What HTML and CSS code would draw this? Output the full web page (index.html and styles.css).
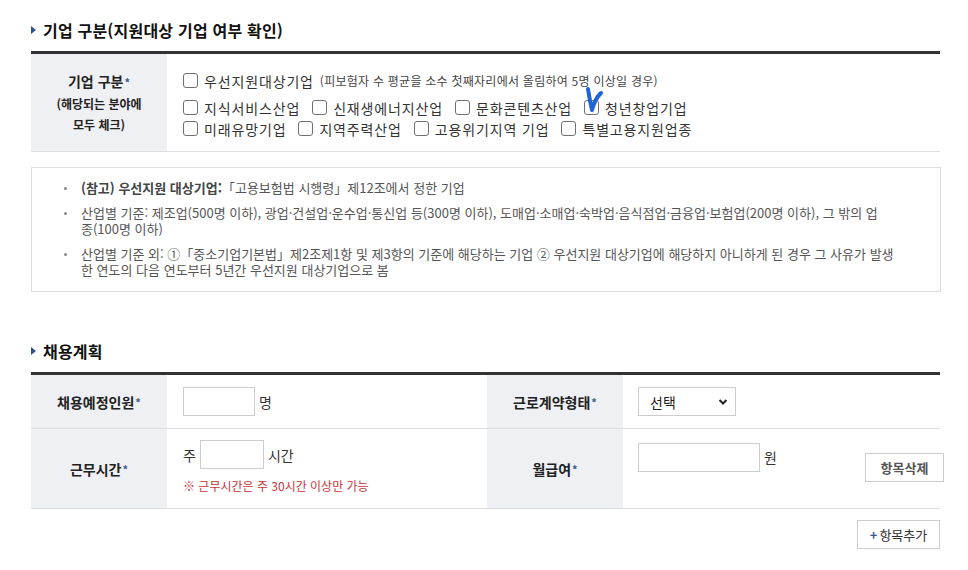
FILE: index.html
```html
<!DOCTYPE html>
<html lang="ko">
<head>
<meta charset="utf-8">
<title>기업 구분</title>
<link rel="stylesheet" href="styles.css">
</head>
<body>
<div class="page">
  <h2 class="sec-title"><span class="tri"></span>기업 구분(지원대상 기업 여부 확인)</h2>
  <div class="tbl">
    <div class="row">
      <div class="th th-type">
        <div class="th-main">기업 구분<span class="req">*</span></div>
        <div class="th-sub">(해당되는 분야에<br>모두 체크)</div>
      </div>
      <div class="td td-checks">
        <div class="chk-line first">
          <label class="chk"><span class="box"></span>우선지원대상기업</label>
          <span class="hint">(피보험자 수 평균을 소수 첫째자리에서 올림하여 5명 이상일 경우)</span>
        </div>
        <div class="chk-line">
          <label class="chk"><span class="box"></span>지식서비스산업</label>
          <label class="chk"><span class="box"></span>신재생에너지산업</label>
          <label class="chk"><span class="box"></span>문화콘텐츠산업</label>
          <label class="chk marked"><span class="box"></span>청년창업기업<svg class="mark" width="22" height="30" viewBox="0 0 22 30"><path d="M4 4 Q5.5 14 8 25 Q11 14 16 9 L17 8" fill="none" stroke="#1f63d6" stroke-width="4" stroke-linecap="round" stroke-linejoin="round"/></svg></label>
        </div>
        <div class="chk-line">
          <label class="chk"><span class="box"></span>미래유망기업</label>
          <label class="chk"><span class="box"></span>지역주력산업</label>
          <label class="chk"><span class="box"></span>고용위기지역 기업</label>
          <label class="chk"><span class="box"></span>특별고용지원업종</label>
        </div>
      </div>
    </div>
  </div>

  <div class="note">
    <ul>
      <li><b>(참고) 우선지원 대상기업:</b>「고용보험법 시행령」제12조에서 정한 기업</li>
      <li>산업별 기준: 제조업(500명 이하), 광업·건설업·운수업·통신업 등(300명 이하), 도매업·소매업·숙박업·음식점업·금융업·보험업(200명 이하), 그 밖의 업<br>종(100명 이하)</li>
      <li>산업별 기준 외: ①「중소기업기본법」제2조제1항 및 제3항의 기준에 해당하는 기업 ② 우선지원 대상기업에 해당하지 아니하게 된 경우 그 사유가 발생<br>한 연도의 다음 연도부터 5년간 우선지원 대상기업으로 봄</li>
    </ul>
  </div>

  <h2 class="sec-title sec2"><span class="tri"></span>채용계획</h2>
  <div class="tbl tbl2">
    <div class="th r1">채용예정인원<span class="req">*</span></div>
    <div class="td r1 td-pad1">
      <input class="inp inp-num" type="text"><span class="unit">명</span>
    </div>
    <div class="th r1">근로계약형태<span class="req">*</span></div>
    <div class="td r1 td-pad2">
      <div class="sel"><span>선택</span><svg width="10" height="8" viewBox="0 0 10 8"><path d="M1.5 2 L5 5.5 L8.5 2" fill="none" stroke="#222" stroke-width="2"/></svg></div>
    </div>

    <div class="th r2">근무시간<span class="req">*</span></div>
    <div class="td r2 td-hours">
      <div class="hours-line"><span class="unit">주</span><input class="inp inp-hr" type="text"><span class="unit">시간</span></div>
      <p class="warn">※ 근무시간은 주 30시간 이상만 가능</p>
    </div>
    <div class="th r2">월급여<span class="req">*</span></div>
    <div class="td r2 td-pay">
      <input class="inp inp-pay" type="text"><span class="unit won">원</span>
      <button class="btn btn-del" type="button">항목삭제</button>
    </div>
  </div>
  <div class="add-row">
    <button class="btn btn-add" type="button"><span class="plus">+</span>항목추가</button>
  </div>
</div>
</body>
</html>
```

FILE: styles.css
```css
* { box-sizing: border-box; }
body {
  margin: 0;
  background: #fff;
  color: #222;
  font-family: "Noto Sans CJK KR", "Noto Sans", sans-serif;
}
.page {
  width: 941px;
  padding: 18px 0 0 31px;
}
.sec-title {
  margin: 0 0 9px;
  height: 24px;
  display: flex;
  align-items: center;
  gap: 7px;
  font-size: 16px;
  line-height: 24px;
  font-weight: 700;
  letter-spacing: 0.2px;
  color: #111;
}
.sec2 { margin-top: 47px; }
.tri {
  width: 0;
  height: 0;
  border-left: 5px solid #2f5384;
  border-top: 4px solid transparent;
  border-bottom: 4px solid transparent;
}
.tbl { border-top: 3px solid #333; width: 909px; }
.row { display: flex; border-bottom: 1px solid #ddd; min-height: 98px; }
.th {
  width: 136px;
  flex-shrink: 0;
  background: #eff0f4;
  display: flex;
  flex-direction: column;
  align-items: center;
  justify-content: center;
  text-align: center;
  font-size: 14px;
  font-weight: 700;
  color: #222;
}
.tbl2 .th { flex-direction: row; }
.req { color: #3d5a8c; font-size: 11px; margin-left: 1px; }
.th-main { line-height: 22px; }
.th-sub { font-size: 12px; line-height: 21px; }
.td-checks {
  padding: 16px 0 0 16px;
  display: flex;
  flex-direction: column;
}
.chk-line {
  display: flex;
  align-items: center;
  gap: 12px;
  height: 21px;
  font-size: 14px;
  letter-spacing: 0.85px;
  color: #333;
}
.chk-line.first { margin-bottom: 6px; }
.chk {
  display: flex;
  align-items: center;
  gap: 6px;
  position: relative;
}
.box {
  width: 15px;
  height: 15px;
  border: 1px solid #707070;
  border-radius: 3px;
  background: #fff;
}
.hint { font-size: 12px; letter-spacing: 0.25px; color: #444; margin-left: -6px; }
.mark { position: absolute; left: 0; top: -13px; }

.note {
  margin-top: 15px;
  width: 910px;
  border: 1px solid #ddd;
  padding: 12px 40px 13px 49px;
}
.note ul { margin: 0; padding: 0; list-style: none; }
.note li {
  position: relative;
  font-size: 13px;
  line-height: 16px;
  color: #555;
  margin-bottom: 9px;
  white-space: nowrap;
}
.note li:last-child { margin-bottom: 0; }
.note li::before {
  content: "";
  position: absolute;
  left: -17px;
  top: 7px;
  width: 3px;
  height: 3px;
  border-radius: 50%;
  background: #888;
}
.note b { color: #444; font-weight: 700; }

.tbl2 {
  display: grid;
  grid-template-columns: 136px 320px 136px 317px;
}
.tbl2 > div { border-bottom: 1px solid #ddd; }
.tbl2 .th { width: auto; }
.r1 { height: 54px; }
.r2 { height: 80px; }
.td { display: flex; font-size: 14px; color: #333; }
.td-pad1 { align-items: center; padding-left: 16px; gap: 4px; }
.td-pad2 { align-items: center; padding-left: 15px; }
.inp {
  height: 29px;
  border: 1px solid #ccc;
  background: #fff;
  margin: 0;
  padding: 0 6px;
  font: inherit;
}
.inp-num { width: 72px; }
.inp-hr { width: 64px; }
.inp-pay { width: 122px; }
.unit { line-height: 20px; }
.sel {
  width: 98px;
  height: 29px;
  border: 1px solid #ccc;
  display: flex;
  align-items: center;
  justify-content: space-between;
  padding: 0 7px 0 11px;
  font-size: 14px;
  color: #222;
}
.td-hours {
  flex-direction: column;
  padding: 11px 0 0 16px;
}
.hours-line { display: flex; align-items: center; gap: 4px; }
.warn {
  margin: 9px 0 0;
  font-size: 12px;
  line-height: 16px;
  color: #c8363a;
}
.td-pay {
  align-items: flex-start;
  padding: 14px 0 0 15px;
}
.won { margin-left: 4px; margin-top: 4px; }
.btn {
  height: 29px;
  border: 1px solid #ccc;
  background: #fff;
  font-family: inherit;
  font-size: 13px;
  padding: 0;
  cursor: pointer;
}
.btn-del {
  width: 79px;
  margin: 10px -4px 0 auto;
  font-weight: 700;
  color: #555;
}
.add-row {
  width: 909px;
  display: flex;
  justify-content: flex-end;
  margin-top: 11px;
}
.btn-add { width: 83px; color: #333; }
.plus { color: #3d5a8c; font-weight: 700; margin-right: 2px; }
```
